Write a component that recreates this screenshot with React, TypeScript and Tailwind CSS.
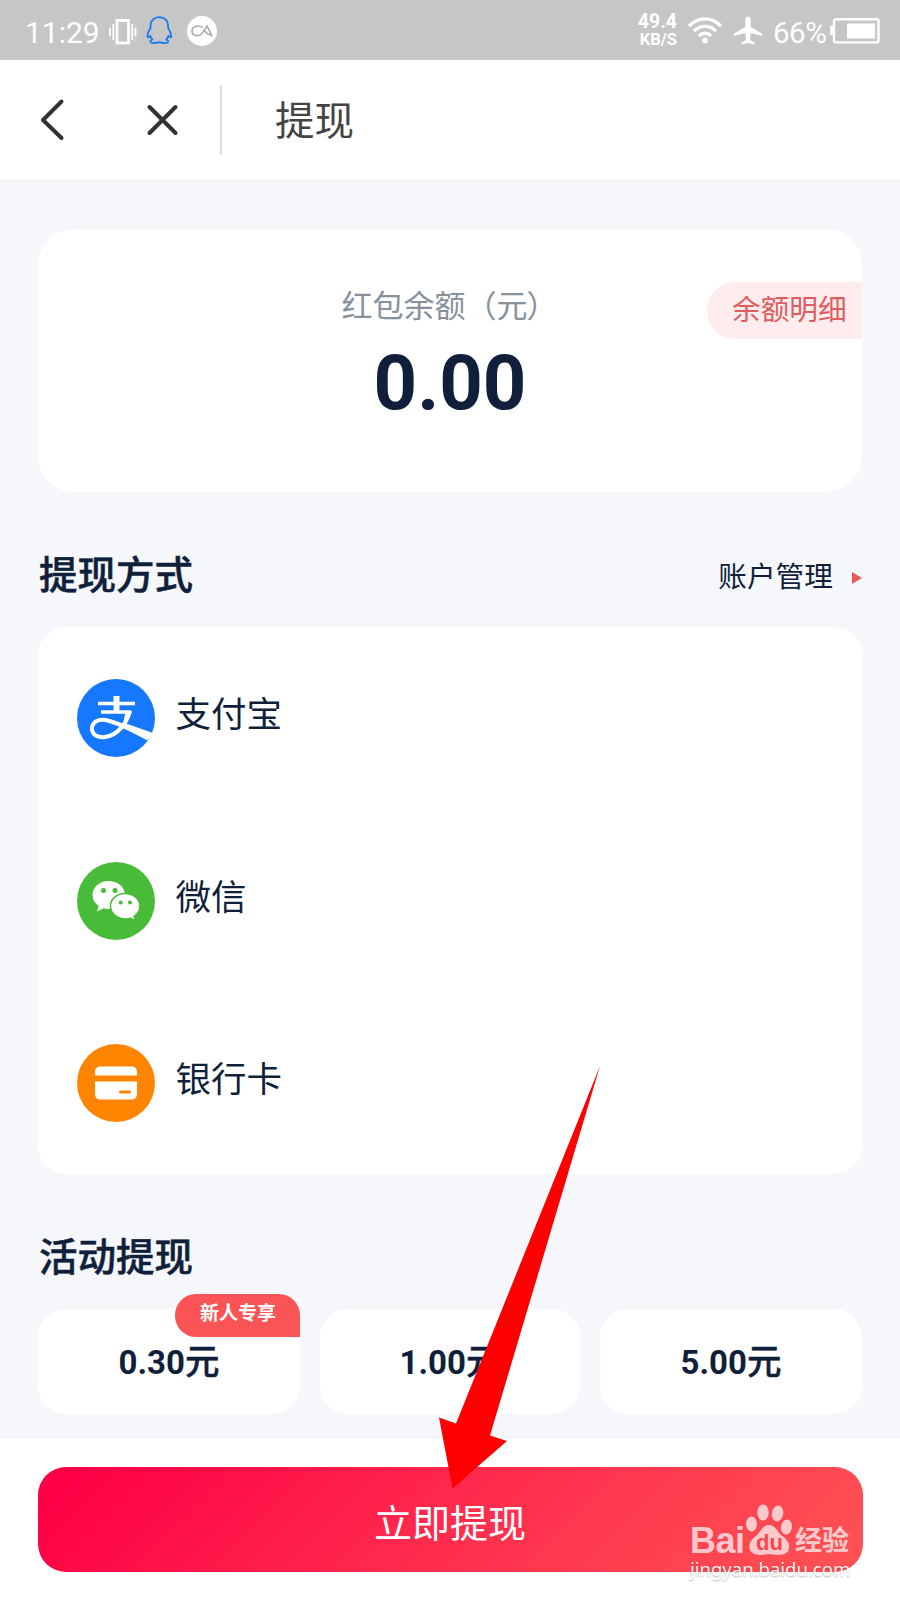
import type { ReactNode } from "react";

function StatusBar() {
  return (
    <div className="flex h-[60px] items-center bg-[#c6c6c6] pl-[25px] pr-5 text-white">
      <span className="w-[84px] pt-[5px] text-[30px] leading-[30px]">11:29</span>
      <svg className="mt-[3px] h-[28px] w-[28px]" viewBox="0 0 28 28" fill="none" stroke="#fff">
        <rect x="8" y="2.500" width="11.500" height="22.500" strokeWidth="2.800" />
        <path d="M4.300 6v16M1 9.500v9M23.200 6v16M26.500 9.500v9" strokeWidth="1.800" />
      </svg>
      <svg className="ml-[9px] mt-[1px] h-[29px] w-[27px]" viewBox="0 0 27 29" fill="none" stroke="#1677ee" strokeWidth="1.800" strokeLinejoin="round">
        <path d="M13.300 1.200C7.800 1.200 4.500 5 4.500 10v2C2.500 15 1.500 17.500 1.300 20.500c.2 1.500 1.700.7 2.900-.8.5 1.600 1.200 2.800 2.200 3.800-1.700.7-2.200 1.500-1.900 2.500.5 1.300 5.500 1.400 8.800.2 3.300 1.200 8.300 1.100 8.800-.2.300-1-.2-1.800-1.900-2.500 1-1 1.700-2.200 2.200-3.800 1.200 1.500 2.700 2.300 2.900.8-.2-3-1.200-5.500-3.200-8.500v-2c0-5-3.300-8.800-8.800-8.800z" />
      </svg>
      <svg className="ml-[14px] mt-[2px] h-[30px] w-[30px]" viewBox="0 0 30 30">
        <circle cx="15" cy="15" r="15" fill="#fff" />
        <path d="M15.500 11.500C11 8.500 5 10.500 5 15c0 5 6.500 6 10 2.500L20 10l5 10M17 14l3 3.500M20 17.500l5.500 2.500" fill="none" stroke="#aaa" strokeWidth="1.600" />
      </svg>
      <div className="ml-auto flex w-[42px] flex-col items-end pt-[2px] text-right font-bold">
        <span className="text-[19.500px] leading-[18px]">49.4</span>
        <span className="text-[16.500px] leading-[18px]">KB/S</span>
      </div>
      <svg className="ml-[10px] mt-[1px] h-[27px] w-[36px]" viewBox="0 0 36 27" fill="none" stroke="#fff" strokeWidth="3.400">
        <path d="M2 9.200C11-.6 25-.6 34 9.200" />
        <path d="M7 14.200c6-6.500 16-6.500 22 0" />
        <path d="M12 19c3.500-3.600 8.500-3.600 12 0" />
        <circle cx="18" cy="23.500" r="2.900" fill="#fff" stroke="none" />
      </svg>
      <svg className="ml-[10px] mt-[1px] h-[29px] w-[30px]" viewBox="0 0 30 29" fill="#fff">
        <path d="M12.300 3.500Q12.600.5 15 .5t2.700 3V11L29 17.500V20l-11.300-3-.7 7 4.500 2.700v1.800L15 27l-6.500 1.500v-1.800L13 24l-.7-7L1 20v-2.500L12.300 11z" />
      </svg>
      <span className="ml-[10px] w-[57px] pt-[5px] text-[29.500px] leading-[30px] tracking-[-0.500px]">66%</span>
      <svg className="mt-[2px] h-[26px] w-[50px]" viewBox="0 0 50 26">
        <rect x="4" y="1.200" width="44.500" height="23.200" rx="2" fill="none" stroke="#fff" strokeWidth="2.400" />
        <path d="M0 8h4v9H0zM17 5.500h28v15H17z" fill="#fff" />
      </svg>
    </div>
  );
}

function Header() {
  return (
    <header className="flex h-[121px] items-center border-b border-[#eeeff2] bg-white pl-[38px]">
      <svg className="h-[44px] w-[30px]" viewBox="0 0 30 44" fill="none" stroke="#333" strokeWidth="4" strokeLinecap="round" strokeLinejoin="round">
        <path d="M23.500 3.500L5 22l18.500 18" />
      </svg>
      <svg className="ml-[78px] h-[34px] w-[34px]" viewBox="0 0 34 34" fill="none" stroke="#333" strokeWidth="4" strokeLinecap="round">
        <path d="M3.500 4l26 26M29.500 4l-26 26" />
      </svg>
      <div className="ml-[40px] h-[70px] w-[2px] bg-[#dcdcdc]" />
      <h1 className="ml-[53px] pt-[4px] text-[39.500px] leading-[60px] text-[#444]">提现</h1>
    </header>
  );
}

function AlipayIcon() {
  return (
    <svg className="h-[78px] w-[78px]" viewBox="0 0 78 78">
      <circle cx="39" cy="39" r="39" fill="#1677ff" />
      <g fill="none" stroke="#fff">
        <path d="M39.500 17v16" strokeWidth="6" />
        <path d="M21 24.500h37M24 33h30" strokeWidth="3.300" />
        <path d="M53 32C50 43 42 56 28 58c-7 1-13-2-13-8.500C15 43 21 40 28 41c10 1.500 22 7.500 42 17" strokeWidth="4" />
      </g>
      <path d="M48.500 32.500h6.500l-6 12L76 54l-5.500 7.500-25-13z" fill="#fff" />
    </svg>
  );
}

function WechatIcon() {
  return (
    <svg className="h-[78px] w-[78px]" viewBox="0 0 78 78">
      <circle cx="39" cy="39" r="39" fill="#48bb38" />
      <path d="M31.500 19C22.500 19 15.500 25.300 15.500 33c0 4.500 2.300 8.300 6.200 11L20 49.500l6.800-3.300c2.700.8 5.200 1 8 .8L48 32C47 24 40 19 31.500 19z" fill="#fff" />
      <path d="M48 31.500c-8 0-14.500 5.500-14.500 12.500S40 57 48 57c1.900 0 3.700-.3 5.300-.9l5.200 2.900-1.500-4.700c3.500-2.300 6-5.700 6-10.300 0-7-7-12.500-15-12.500z" fill="#fff" stroke="#48bb38" strokeWidth="1.500" />
      <g fill="#48bb38">
        <circle cx="26.500" cy="28.500" r="2.500" />
        <circle cx="38" cy="28.500" r="2.500" />
        <circle cx="43.700" cy="40.500" r="2" />
        <circle cx="53" cy="40.500" r="2" />
      </g>
    </svg>
  );
}

function CardIcon() {
  return (
    <svg className="h-[78px] w-[78px]" viewBox="0 0 78 78">
      <circle cx="39" cy="39" r="39" fill="#ff8400" />
      <path d="M18 31.500v-3.500q0-5.500 5.500-5.500h31q5.500 0 5.500 5.500v3.500zM18 37.500h42V50q0 5.500-5.500 5.500h-31Q18 55.500 18 50z" fill="#fff" />
      <path d="M43.500 48h9" stroke="#ff8400" strokeWidth="3" strokeLinecap="round" />
    </svg>
  );
}

function Method({ icon, name }: { icon: ReactNode; name: string }) {
  return (
    <li className="flex h-[182.500px] items-start gap-[20.500px]">
      {icon}
      <span className="pt-[6px] text-[35.500px] leading-[60px]">{name}</span>
    </li>
  );
}

function Amount({ value, badge }: { value: string; badge?: string }) {
  return (
    <div className="relative flex h-[105px] justify-center rounded-[28px] bg-white pt-[33px] text-[33px] font-bold leading-[40px]">
      <span>
        {value}
        <span className="text-[34.500px] font-medium [-webkit-text-stroke:0.4px_#101f3a]">元</span>
      </span>
      {badge && (
        <span className="absolute right-0 top-[-15px] h-[43px] w-[125px] rounded-[21px] rounded-br-none bg-[#fb5456] pl-[1px] text-center text-[19px] leading-[40px] text-white">
          {badge}
        </span>
      )}
    </div>
  );
}

function Watermark() {
  return (
    <div className="absolute left-[690px] top-[1500px] w-[175px] text-white">
      <div className="flex h-[57px] items-end opacity-70">
        <span className="w-[55px] font-['Liberation_Sans'] text-[36px] font-bold leading-[33px] tracking-[-0.500px]">Bai</span>
        <svg className="ml-[1px] mb-[1px] h-[52px] w-[46px]" viewBox="0 0 46 52" fill="#fff">
          <ellipse cx="5.500" cy="20" rx="5.500" ry="7.500" />
          <ellipse cx="17" cy="8.500" rx="5.700" ry="8" />
          <ellipse cx="31.500" cy="9.500" rx="5.700" ry="8" transform="rotate(10 31.500 9.500)" />
          <ellipse cx="40.500" cy="23" rx="5.500" ry="7.500" transform="rotate(10 40.500 23)" />
          <path d="M23 21c6 0 8 6 12 10 5 4 9 7 8 13-1 7-8 8-20 6-11 2-18 1-19.500-6C2.500 38 7 34 11 31c4-4 6-10 12-10z" />
          <text x="23.500" y="46" textAnchor="middle" fill="#fa4650" fontFamily="Liberation Sans" fontWeight="700" fontSize="22">du</text>
        </svg>
        <span className="ml-[3px] text-[27px] font-bold leading-[32px]">经验</span>
      </div>
      <div className="font-['Noto_Sans'] text-[18.500px] leading-[24px] opacity-90 [text-shadow:0_1px_2px_rgba(0,0,0,0.35)]">jingyan.baidu.com</div>
    </div>
  );
}

export default function App() {
  return (
    <div className="relative flex h-[1600px] w-[900px] flex-col overflow-hidden bg-[#f5f7fb] font-[Roboto,'Noto_Sans_CJK_SC',sans-serif] text-[#101f3a]">
      <StatusBar />
      <Header />
      <main className="flex h-[1258px] flex-col px-[38px] pt-[48px]">
        <section className="relative flex h-[263px] flex-col items-center rounded-[36px] bg-white pt-[58px]">
          <p className="text-[31px] leading-[40px] text-[#87919b]">
            红包余额（元<span className="ml-[-1px] mr-[1px]">）</span>
          </p>
          <p className="mt-[16px] text-[76px] font-bold leading-[80px]">0.00</p>
          <a className="absolute right-0 top-[53px] h-[57px] w-[155px] rounded-l-full bg-[#ffeced] pl-[25px] text-[28.700px] leading-[56px] text-[#e05c60]">余额明细</a>
        </section>
        <div className="mt-[54px] flex h-[60px] items-center justify-between">
          <h2 className="pl-[1px] text-[38.500px] font-medium leading-[60px] [-webkit-text-stroke:0.5px_#101f3a]">提现方式</h2>
          <a className="flex items-center pt-[1px] text-[28.700px] leading-[60px]">
            账户管理
            <svg className="ml-[19px] mt-[3px] h-[12px] w-[10px]" viewBox="0 0 10 12">
              <path d="M0 0l10 6-10 6z" fill="#e85a5c" />
            </svg>
          </a>
        </div>
        <ul className="mt-[21px] h-[547px] overflow-hidden rounded-[28px] bg-white pl-[39px] pt-[52px]">
          <Method icon={<AlipayIcon />} name="支付宝" />
          <Method icon={<WechatIcon />} name="微信" />
          <Method icon={<CardIcon />} name="银行卡" />
        </ul>
        <h2 className="mt-[54px] pl-[1px] text-[38.500px] font-medium leading-[60px] [-webkit-text-stroke:0.5px_#101f3a]">活动提现</h2>
        <div className="mt-[21px] grid grid-cols-[262px_260px_262px] gap-5">
          <Amount value="0.30" badge="新人专享" />
          <Amount value="1.00" />
          <Amount value="5.00" />
        </div>
      </main>
      <footer className="flex-1 bg-white px-[37.500px] pt-[28px]">
        <button className="block h-[105px] w-[825px] rounded-[28px] bg-[linear-gradient(135deg,#ff0046_5%,#ff2b4d_50%,#ff5053_95%)] pt-[9px] text-[38px] leading-[96px] text-white">
          立即提现
        </button>
      </footer>
      <Watermark />
      <svg className="absolute left-[430px] top-[1060px] h-[430px] w-[180px]" viewBox="430 1060 180 430">
        <path d="M600 1066L490 1435.500l17 5.500-54.500 47.500-13.500-71 17 6z" fill="#f00" />
      </svg>
    </div>
  );
}
